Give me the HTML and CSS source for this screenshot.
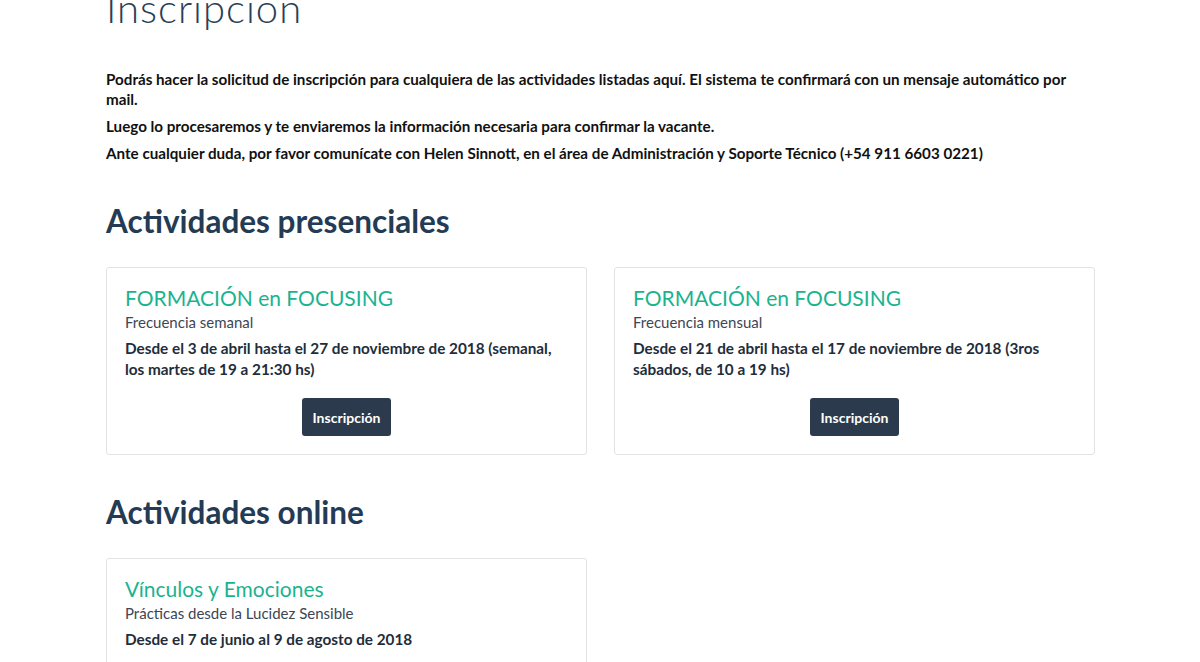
FILE: index.html
```html
<!DOCTYPE html>
<html lang="es">
<head>
<meta charset="utf-8">
<title>Inscripción</title>
<link rel="stylesheet" href="styles.css">
</head>
<body>
<main class="page">
  <h1 class="page-title">Inscripcion</h1>
  <div class="intro">
    <p>Podrás hacer la solicitud de inscripción para cualquiera de las actividades listadas aquí. El sistema te confirmará con un mensaje automático por mail.</p>
    <p>Luego lo procesaremos y te enviaremos la información necesaria para confirmar la vacante.</p>
    <p>Ante cualquier duda, por favor comunícate con Helen Sinnott, en el área de Administración y Soporte Técnico (+54 911 6603 0221)</p>
  </div>

  <h2 class="section-title">Actividades presenciales</h2>
  <div class="cards">
    <div class="card">
      <h3 class="card-title">FORMACIÓN en FOCUSING</h3>
      <div class="card-sub">Frecuencia semanal</div>
      <div class="card-date">Desde el 3 de abril hasta el 27 de noviembre de 2018 (semanal, los martes de 19 a 21:30 hs)</div>
      <div class="card-actions"><button class="btn">Inscripción</button></div>
    </div>
    <div class="card">
      <h3 class="card-title">FORMACIÓN en FOCUSING</h3>
      <div class="card-sub">Frecuencia mensual</div>
      <div class="card-date">Desde el 21 de abril hasta el 17 de noviembre de 2018 (3ros sábados, de 10 a 19 hs)</div>
      <div class="card-actions"><button class="btn">Inscripción</button></div>
    </div>
  </div>

  <h2 class="section-title">Actividades online</h2>
  <div class="cards">
    <div class="card">
      <h3 class="card-title">Vínculos y Emociones</h3>
      <div class="card-sub">Prácticas desde la Lucidez Sensible</div>
      <div class="card-date">Desde el 7 de junio al 9 de agosto de 2018</div>
      <div class="card-actions"><button class="btn">Inscripción</button></div>
    </div>
  </div>
</main>
</body>
</html>
```

FILE: styles.css
```css
* { box-sizing: border-box; }
html, body { margin: 0; padding: 0; background: #fff; }
body {
  font-family: Lato, "Open Sans", sans-serif;
  color: #111;
}
.page {
  width: 989px;
  margin-left: 106px;
}
.page-title {
  margin: -16px 0 0 0;
  font-size: 40px;
  line-height: 48px;
  font-weight: 300;
  letter-spacing: 1px;
  color: #2a3f57;
}
.intro {
  margin-top: 37px;
  max-width: 965px;
  padding-bottom: 2px;
}
.intro p {
  margin: 0 0 7px 0;
  font-size: 15.2px;
  line-height: 20px;
  font-weight: 700;
  color: #111;
}
.intro p:last-child {
  margin-bottom: 0;
}
.section-title {
  margin: 36px 0 26px 0;
  font-size: 31.5px;
  line-height: 40px;
  font-weight: 700;
  color: #243b55;
}
.cards + .section-title {
  margin-top: 37px;
}
.cards {
  display: grid;
  grid-template-columns: 481px 481px;
  gap: 27px;
}
.card {
  border: 1px solid #e3e3e3;
  border-radius: 3px;
  padding: 16px 18px 18px 18px;
}
.card-title {
  margin: 0;
  font-size: 21px;
  line-height: 28px;
  font-weight: 400;
  color: #1bb38f;
}
.card-sub {
  font-size: 15px;
  line-height: 20px;
  color: #3d4653;
}
.card-date {
  margin-top: 6px;
  font-size: 15.3px;
  line-height: 21px;
  font-weight: 700;
  color: #222d3b;
}
.card-actions {
  display: flex;
  justify-content: center;
  margin-top: 18px;
}
.btn {
  font-family: inherit;
  font-size: 14px;
  font-weight: 700;
  color: #fff;
  background: #2b3a4c;
  border: none;
  border-radius: 3px;
  height: 38px;
  padding: 0 11px;
}
```
